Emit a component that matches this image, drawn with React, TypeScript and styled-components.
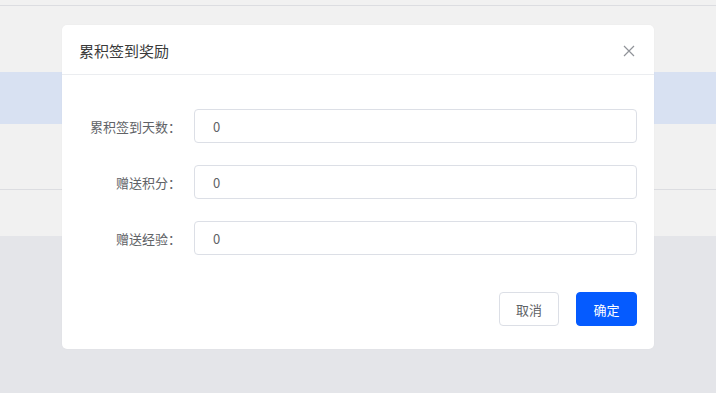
import React from 'react';
import styled, { createGlobalStyle } from 'styled-components';

const GlobalStyle = createGlobalStyle`
  html, body {
    margin: 0;
    padding: 0;
    background: #e4e5e9;
    font-family: "Noto Sans CJK SC", "Noto Sans", sans-serif;
  }
`;

const Page = styled.div`
  width: 716px;
  height: 393px;
  position: relative;
  overflow: hidden;
  background: #e4e5e9;
`;

const TableArea = styled.div`
  display: flex;
  flex-direction: column;
`;

const TableRow = styled.div<{ h: number; tone?: 'grey' | 'blue'; line?: boolean }>`
  height: ${p => p.h}px;
  background: ${p => (p.tone === 'blue' ? '#d8e1f2' : '#f1f1f1')};
  border-bottom: ${p => (p.line ? '1px solid #dcdde1' : 'none')};
`;

const Overlay = styled.div`
  position: absolute;
  inset: 0;
  display: flex;
  justify-content: center;
  align-items: flex-start;
  padding-top: 25px;
`;

const Dialog = styled.div`
  width: 592px;
  background: #fff;
  border-radius: 5px;
  box-shadow: 0 0 2px rgba(0, 0, 0, 0.04);
`;

const Header = styled.div`
  height: 49px;
  border-bottom: 1px solid #ebedf0;
  display: flex;
  align-items: center;
  justify-content: space-between;
  padding: 0 18px 0 17px;
`;

const Title = styled.div`
  font-size: 15px;
  color: #3a3a3a;
  padding-top: 1px;
`;

const CloseBtn = styled.div`
  width: 14px;
  height: 14px;
  display: flex;
  align-items: center;
  justify-content: center;
  margin-top: 2px;
`;

const Body = styled.div`
  padding: 34px 17px 0 0;
  display: flex;
  flex-direction: column;
  gap: 22px;
`;

const FormRow = styled.div`
  display: flex;
  align-items: center;
`;

const Label = styled.label`
  width: 132px;
  box-sizing: border-box;
  padding-right: 13px;
  text-align: right;
  font-size: 13px;
  color: #606266;
`;

const Input = styled.div`
  flex: 1;
  height: 34px;
  box-sizing: border-box;
  border: 1px solid #dcdfe6;
  border-radius: 4px;
  display: flex;
  align-items: center;
  padding-left: 18px;
  font-size: 13px;
  color: #606266;
`;

const Footer = styled.div`
  display: flex;
  justify-content: flex-end;
  gap: 17px;
  padding: 37px 17px 23px 0;
`;

const Button = styled.button<{ primary?: boolean }>`
  height: 34px;
  width: ${p => (p.primary ? 61 : 60)}px;
  border-radius: 4px;
  font-family: inherit;
  font-size: 13px;
  border: 1px solid ${p => (p.primary ? '#055bff' : '#dcdfe6')};
  background: ${p => (p.primary ? '#055bff' : '#fff')};
  color: ${p => (p.primary ? '#fff' : '#606266')};
  padding: 0;
`;

const fields = [
  { label: '累积签到天数：', value: '0' },
  { label: '赠送积分：', value: '0' },
  { label: '赠送经验：', value: '0' },
];

export default function App() {
  return (
    <Page>
      <GlobalStyle />
      <TableArea>
        <TableRow h={5} line />
        <TableRow h={66} />
        <TableRow h={52} tone="blue" />
        <TableRow h={65} line />
        <TableRow h={46} />
      </TableArea>
      <Overlay>
        <Dialog>
          <Header>
            <Title>累积签到奖励</Title>
            <CloseBtn>
              <svg width="12" height="12" viewBox="0 0 12 12">
                <path d="M1 1L11 11M11 1L1 11" stroke="#909399" strokeWidth="1.2" fill="none" />
              </svg>
            </CloseBtn>
          </Header>
          <Body>
            {fields.map(f => (
              <FormRow key={f.label}>
                <Label>{f.label}</Label>
                <Input>{f.value}</Input>
              </FormRow>
            ))}
          </Body>
          <Footer>
            <Button>取消</Button>
            <Button primary>确定</Button>
          </Footer>
        </Dialog>
      </Overlay>
    </Page>
  );
}
